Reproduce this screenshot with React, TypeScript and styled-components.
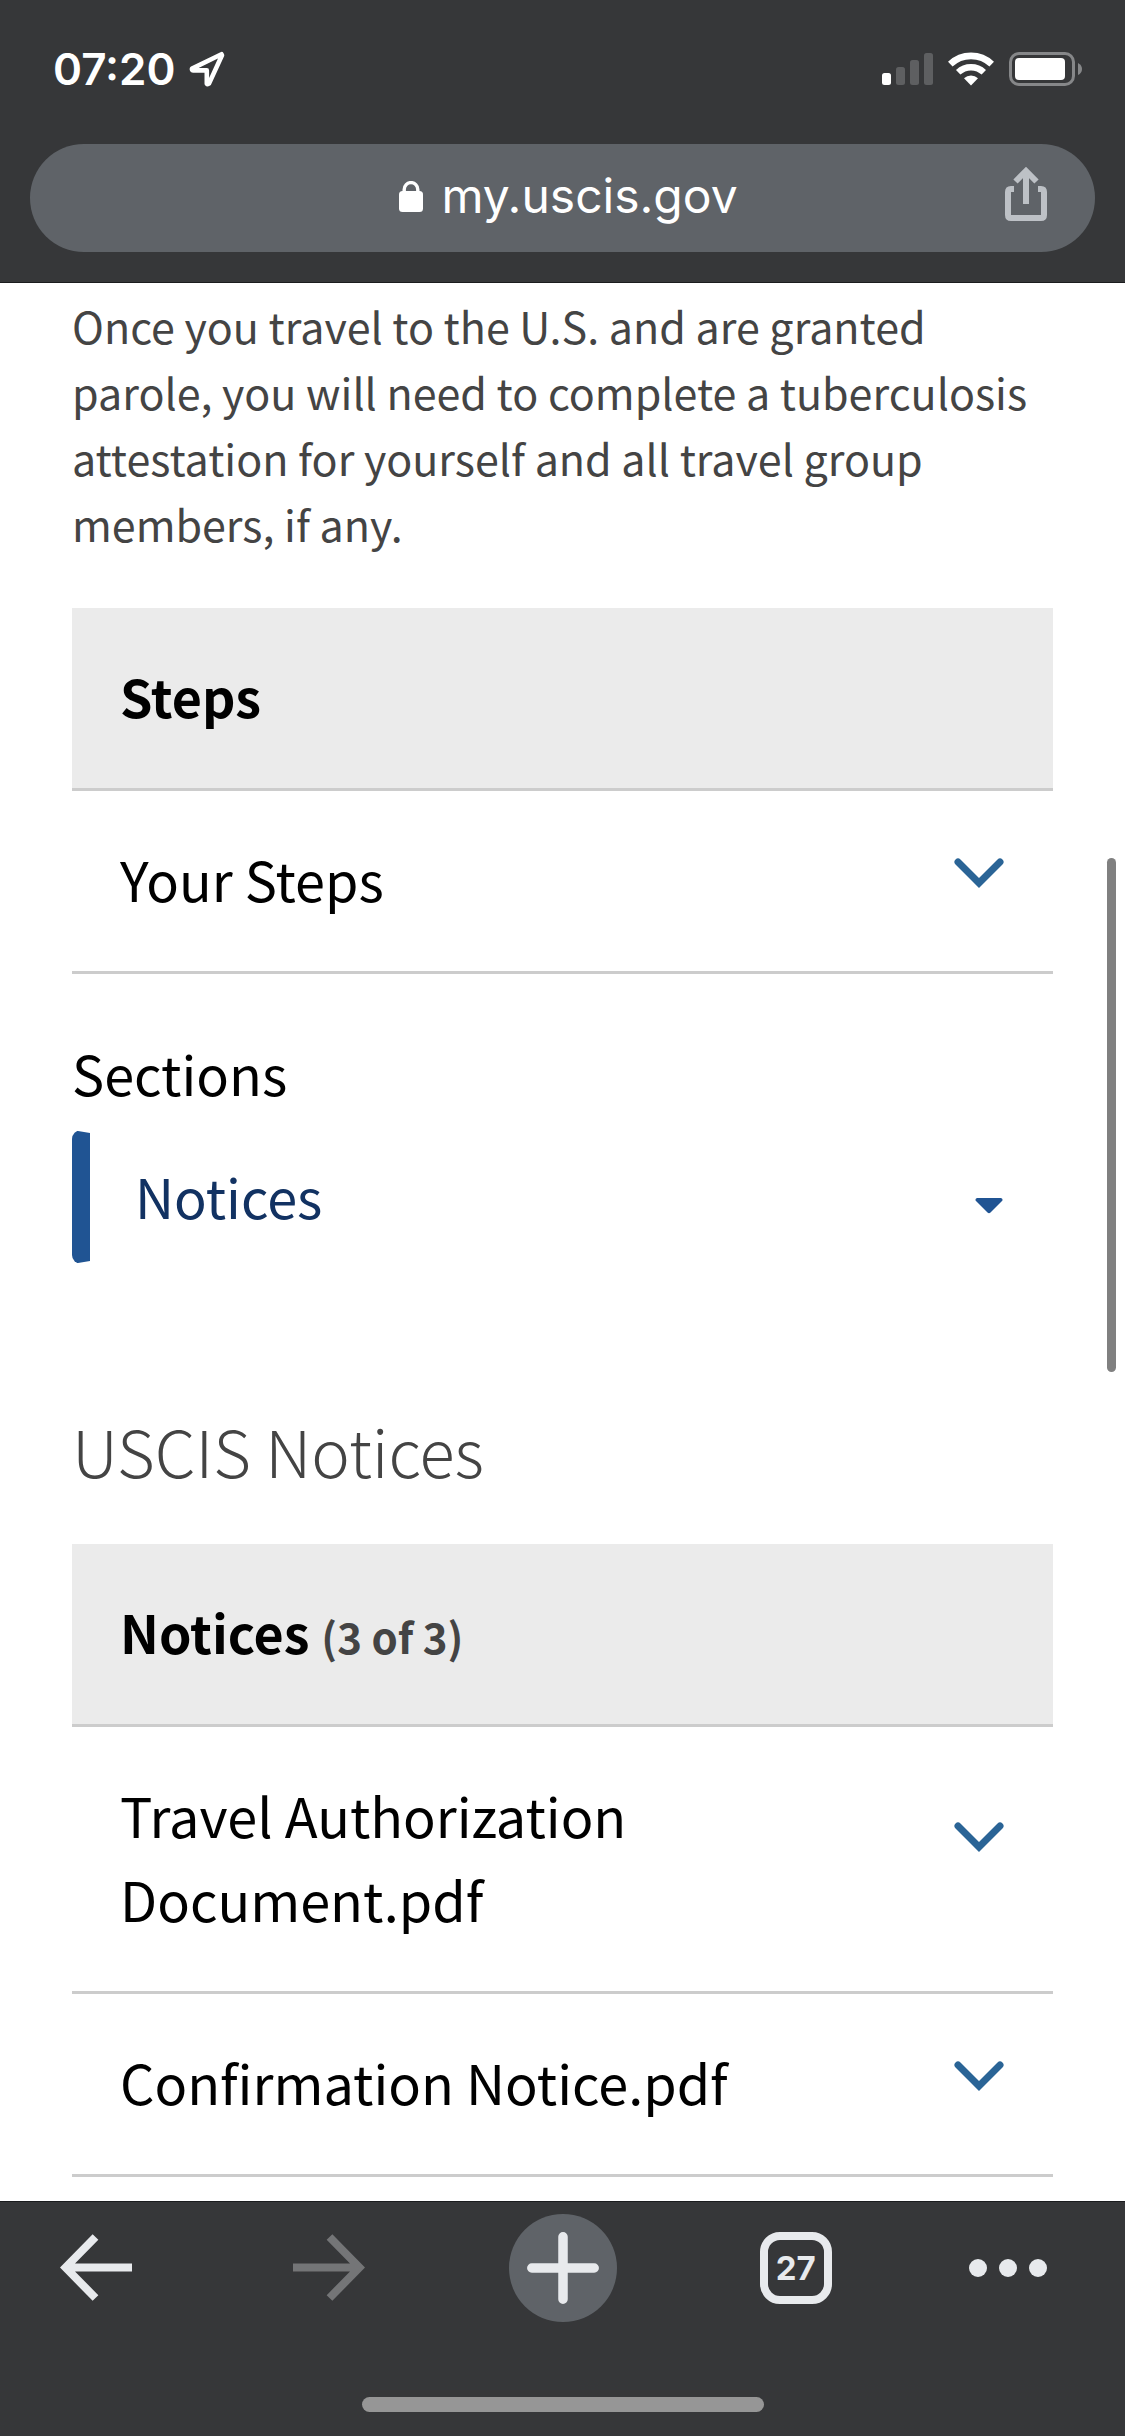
import React from "react";
import styled, { createGlobalStyle } from "styled-components";

const contentFont = `"Noto Sans CJK SC", "Noto Sans", sans-serif`;
const systemFont = `Inter, "Liberation Sans", sans-serif`;

const GlobalStyle = createGlobalStyle`
  *, *::before, *::after { box-sizing: border-box; }
  body { margin: 0; background: #ffffff; }
  button { font: inherit; color: inherit; background: none; border: 0; padding: 0; margin: 0; text-align: left; cursor: pointer; }
  svg { display: block; flex-shrink: 0; }
`;

const Page = styled.div`
  min-height: 100vh;
  display: flex;
  flex-direction: column;
  font-family: ${contentFont};
`;

const BrowserHeader = styled.header`
  background: #363739;
  border-bottom: 1px solid #1b1c1e;
  padding: 0 30px 30px;
  font-family: ${systemFont};
  color: #ffffff;
`;

const StatusBar = styled.div`
  height: 144px;
  padding: 6px 13px 12px 23px;
  display: flex;
  align-items: center;
  justify-content: space-between;
`;

const StatusGroup = styled.div<{ $gap: number }>`
  display: flex;
  align-items: center;
  gap: ${(p) => p.$gap}px;
`;

const Clock = styled.time`
  font-size: 44px;
  line-height: 54px;
  font-weight: 600;
`;

const AddressBar = styled.div`
  height: 108px;
  border-radius: 54px;
  background: #5f6368;
  padding: 0 48px 4px;
  display: grid;
  grid-template-columns: 1fr auto 1fr;
  align-items: center;
`;

const Address = styled.button`
  grid-column: 2;
  display: flex;
  align-items: center;
  gap: 18px;
  padding-left: 12px;
  font-size: 48px;
  line-height: 60px;
`;

const ShareButton = styled.button`
  justify-self: end;
`;

const Main = styled.main`
  position: relative;
  flex: 1;
  padding: 9px 72px 24px;
  background: #ffffff;
`;

const ScrollThumb = styled.div`
  position: absolute;
  top: 575px;
  right: 9px;
  width: 9px;
  height: 514px;
  border-radius: 5px;
  background: #808080;
`;

const Intro = styled.p`
  margin: 0 0 52px;
  font-size: 43px;
  line-height: 66px;
  color: #444444;
`;

const Accordion = styled.section`
  font-size: 54px;
  line-height: 84px;
  color: #000000;
`;

const AccordionTitle = styled.h2`
  margin: 0;
  padding: 46px 48px 50px;
  background: #ebebeb;
  border-bottom: 3px solid #cccccc;
  font-size: 52px;
  font-weight: 600;
`;

const Count = styled.span`
  font-size: 42px;
  line-height: 60px;
  color: #444444;
`;

const RowHeading = styled.h3`
  margin: 0;
  border-bottom: 3px solid #cccccc;
  font-size: inherit;
  font-weight: 400;
`;

const RowButton = styled.button`
  width: 100%;
  padding: 46px 48px 50px;
  display: grid;
  grid-template-columns: minmax(0, 640px) auto;
  justify-content: space-between;
`;

const RowIcon = styled.span`
  display: grid;
  grid-template-rows: 1fr auto 2fr;
  padding-top: 4px;

  svg {
    grid-row: 2;
  }
`;

const SectionsLabel = styled.h2`
  margin: 58px 0 16px;
  font-size: 54px;
  line-height: 82px;
  font-weight: 400;
  color: #000000;
`;

const SectionPicker = styled.button`
  width: 100%;
  height: 134px;
  padding: 0 47px 2px 45px;
  display: flex;
  align-items: center;
  justify-content: space-between;
  border: 3px solid transparent;
  border-left: 18px solid #205493;
  border-radius: 9px;
  font-size: 54px;
  line-height: 84px;
  color: #123262;
`;

const PickerIcon = styled.span`
  padding-top: 19px;
`;

const PageTitle = styled.h1`
  margin: 138px 0 46px;
  font-size: 65px;
  line-height: 96px;
  font-weight: 300;
  color: #444444;
`;

const Toolbar = styled.footer`
  background: #363739;
  border-top: 1px solid #1b1c1e;
  padding: 12px 42px 24px;
  font-family: ${systemFont};
`;

const ToolbarButtons = styled.nav`
  display: flex;
  justify-content: space-between;
`;

const ToolButton = styled.button<{ $round?: boolean }>`
  width: 108px;
  height: 108px;
  display: flex;
  align-items: center;
  justify-content: center;
  border-radius: 50%;
  background: ${(p) => (p.$round ? "#5f6368" : "transparent")};
`;

const TabCount = styled.span`
  width: 72px;
  height: 72px;
  display: flex;
  align-items: center;
  justify-content: center;
  border: 8px solid #e8eaed;
  border-radius: 20px;
  font-size: 33px;
  line-height: 36px;
  font-weight: 700;
  color: #e8eaed;
`;

const HomeIndicator = styled.div`
  width: 402px;
  height: 15px;
  margin: 75px auto 0;
  border-radius: 8px;
  background: #969696;
`;

const Location = () => (
  <svg width="36" height="36" viewBox="0 0 36 36" fill="none" stroke="#fff" strokeWidth="4.6" strokeLinejoin="round" aria-hidden="true">
    <path d="M32.5 3.2 3 17.6Q2.6 19.4 4 19.4H17.8V32.6Q18.6 33.8 20 32.6L33 4.2Z" />
  </svg>
);

const Signal = () => (
  <svg width="51" height="32" viewBox="0 0 51 32" aria-label="Signal strength">
    <rect x="0" y="20" width="9" height="12" rx="2.5" fill="#fff" />
    <rect x="14" y="14" width="9" height="18" rx="2.5" fill="#5e5f61" />
    <rect x="28" y="7" width="9" height="25" rx="2.5" fill="#5e5f61" />
    <rect x="42" y="0" width="9" height="32" rx="2.5" fill="#5e5f61" />
  </svg>
);

const Wifi = () => (
  <svg width="46" height="34" viewBox="0 0 46 34" fill="none" stroke="#fff" aria-label="Wi-Fi">
    <path d="M2.3 12.2A30 30 0 0 1 43.7 12.2" strokeWidth="6.6" />
    <path d="M10.2 20.3A18.6 18.6 0 0 1 35.8 20.3" strokeWidth="6.4" />
    <path d="M23 33.4 16 26.2A10.4 10.4 0 0 1 30 26.2Z" fill="#fff" stroke="none" />
  </svg>
);

const Battery = () => (
  <svg width="73" height="34" viewBox="0 0 73 34" aria-label="Battery">
    <rect x="1.5" y="1.5" width="63" height="31" rx="8.5" fill="none" stroke="#868789" strokeWidth="3" />
    <rect x="6" y="6" width="50" height="22" rx="4" fill="#fff" />
    <path d="M69 11Q73 13 73 17T69 23Z" fill="#868789" />
  </svg>
);

const Lock = () => (
  <svg width="24" height="31" viewBox="0 0 24 31" aria-hidden="true">
    <rect x="0" y="10" width="24" height="21" rx="3.5" fill="#fff" />
    <path d="M5.2 12V8.4A6.8 6.8 0 0 1 18.8 8.4V12" fill="none" stroke="#fff" strokeWidth="3.4" />
  </svg>
);

const Share = () => (
  <svg width="42" height="58" viewBox="0 0 42 58" fill="none" stroke="#bdc1c6" strokeWidth="6" aria-hidden="true">
    <path d="M9 22H6Q3 22 3 25V48Q3 51 6 51H36Q39 51 39 48V25Q39 22 36 22H33" />
    <path d="M21 37V5M10.5 14.5 21 4 31.5 14.5" />
  </svg>
);

const Chevron = () => (
  <svg width="51" height="30" viewBox="0 0 51 30" fill="none" stroke="#2a6496" strokeWidth="7" aria-hidden="true">
    <path d="M4 4 25 25 46 4" strokeLinecap="round" />
  </svg>
);

const Caret = () => (
  <svg width="28" height="16" viewBox="0 0 28 16" aria-hidden="true">
    <path d="M2 0H26Q28.5 1 27 3L15.5 14.5Q14 16 12.5 14.5L1 3Q-.5 1 2 0Z" fill="#205493" />
  </svg>
);

const Arrow = ({ forward = false }: { forward?: boolean }) => (
  <svg width="72" height="72" viewBox="0 0 72 72" fill="none" stroke={forward ? "#747577" : "#e8eaed"} strokeWidth="8" aria-hidden="true">
    <path d={forward ? "M0 35.5H67M36.5 5 66.5 35.5 36.5 66" : "M72 35.5H5M35.5 5 5.5 35.5 35.5 66"} />
  </svg>
);

const Plus = () => (
  <svg width="72" height="72" viewBox="0 0 72 72" fill="none" stroke="#e8eaed" strokeWidth="9.5" strokeLinecap="round" aria-hidden="true">
    <path d="M36 4.8V67.2M4.8 36H67.2" />
  </svg>
);

const Dots = () => (
  <svg width="120" height="18" viewBox="0 0 120 18" fill="#e8eaed" aria-hidden="true">
    <circle cx="9" cy="9" r="9" />
    <circle cx="39" cy="9" r="9" />
    <circle cx="69" cy="9" r="9" />
  </svg>
);

const AccordionRow = ({ title }: { title: string }) => (
  <RowHeading>
    <RowButton type="button" aria-expanded={false}>
      <span>{title}</span>
      <RowIcon>
        <Chevron />
      </RowIcon>
    </RowButton>
  </RowHeading>
);

const notices = ["Travel Authorization Document.pdf", "Confirmation Notice.pdf"];

export default function App() {
  return (
    <Page>
      <GlobalStyle />
      <BrowserHeader>
        <StatusBar>
          <StatusGroup $gap={13}>
            <Clock>07:20</Clock>
            <Location />
          </StatusGroup>
          <StatusGroup $gap={15}>
            <Signal />
            <Wifi />
            <Battery />
          </StatusGroup>
        </StatusBar>
        <AddressBar>
          <Address type="button">
            <Lock />
            my.uscis.gov
          </Address>
          <ShareButton type="button" aria-label="Share">
            <Share />
          </ShareButton>
        </AddressBar>
      </BrowserHeader>

      <Main>
        <Intro>
          Once you travel to the U.S. and are granted parole, you will need to complete a tuberculosis attestation for
          yourself and all travel group members, if any.
        </Intro>
        <Accordion>
          <AccordionTitle>Steps</AccordionTitle>
          <AccordionRow title="Your Steps" />
        </Accordion>
        <SectionsLabel id="sections-label">Sections</SectionsLabel>
        <SectionPicker type="button" aria-haspopup="menu" aria-describedby="sections-label">
          Notices
          <PickerIcon>
            <Caret />
          </PickerIcon>
        </SectionPicker>
        <PageTitle>USCIS Notices</PageTitle>
        <Accordion>
          <AccordionTitle>
            Notices <Count>(3 of 3)</Count>
          </AccordionTitle>
          {notices.map((title) => (
            <AccordionRow key={title} title={title} />
          ))}
        </Accordion>
        <ScrollThumb />
      </Main>

      <Toolbar>
        <ToolbarButtons aria-label="Browser">
          <ToolButton type="button" aria-label="Back">
            <Arrow />
          </ToolButton>
          <ToolButton type="button" aria-label="Forward" disabled>
            <Arrow forward />
          </ToolButton>
          <ToolButton type="button" aria-label="New tab" $round>
            <Plus />
          </ToolButton>
          <ToolButton type="button" aria-label="Tabs">
            <TabCount>27</TabCount>
          </ToolButton>
          <ToolButton type="button" aria-label="Menu">
            <Dots />
          </ToolButton>
        </ToolbarButtons>
        <HomeIndicator />
      </Toolbar>
    </Page>
  );
}
